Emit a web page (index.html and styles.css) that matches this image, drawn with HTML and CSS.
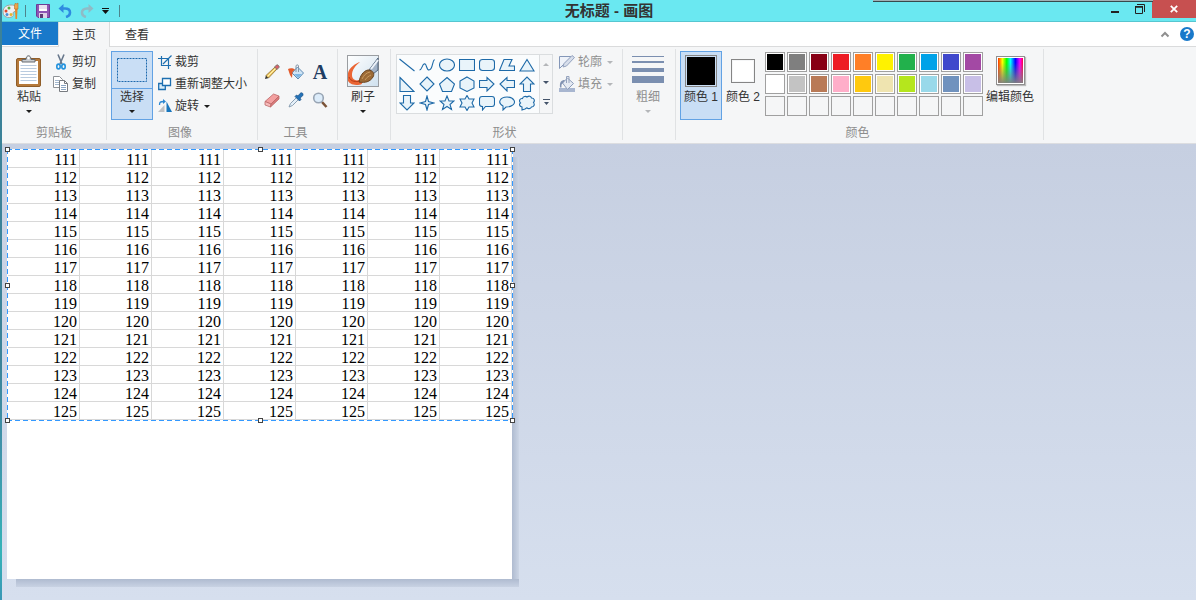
FILE: index.html
```html
<!DOCTYPE html>
<html lang="zh-CN">
<head>
<meta charset="utf-8">
<title>无标题 - 画图</title>
<link rel="stylesheet" href="styles.css">
</head>
<body>
<div class="backdrop"></div>
<div class="window">
  <header class="titlebar">
    <div class="quick">
      <svg class="app-icon" width="18" height="18" viewBox="0 0 18 18"><path d="M1 10C1 5 5 3 9 3c4 0 6 2 6 4 0 3-4 2-4 4s1 2 0 3c-1 2-10 3-10-4z" fill="#eef0f4" stroke="#a3a39c"/><circle cx="4" cy="9" r="1.5" fill="#e44a2c"/><circle cx="7" cy="6" r="1.5" fill="#58ad3c"/><circle cx="5" cy="12.500" r="1.500" fill="#4a8fd8"/><circle cx="9" cy="12.500" r="1.500" fill="#e8b32c"/><path d="M13 7h2.500l-.5 10h-1.500z" fill="#e7872a"/><path d="M12.500 7V3l1-2 1 1 1.500-1v6z" fill="#f0a64a" stroke="#b86f2c" stroke-width=".6"/></svg>
      <span class="bar"></span>
      <button class="qbtn" aria-label="保存"><svg width="14" height="14" viewBox="0 0 14 14"><path d="M.5.5h13v13H2l-1.500-1.500z" fill="#8d55b5" stroke="#6d3d94"/><path d="M3 1h8v6H3z" fill="#fff"/><path d="M3 2h8M3 4h8" stroke="#d5c3e2"/><path d="M3 9h8v5H3z" fill="#ddd2e6"/><path d="M4 10h3v4H4z" fill="#5b3a75"/></svg></button>
      <button class="qbtn" aria-label="撤消"><svg width="14" height="14" viewBox="0 0 14 14"><path d="M3 4.500h4c3.500 0 5 1.800 5 4 0 2-1.500 3.800-4 4.500" fill="none" stroke="#2e8be0" stroke-width="2.600"/><path d="M.5 4.500 5.500 0v9z" fill="#2e8be0"/></svg></button>
      <button class="qbtn" aria-label="重做"><svg width="14" height="14" viewBox="0 0 14 14"><path d="M11 4.500H7c-3.500 0-5 1.800-5 4C2 10.500 3.500 12.300 6 13" fill="none" stroke="#8fbbc6" stroke-width="2.600"/><path d="M13.500 4.500 8.500 0v9z" fill="#8fbbc6"/></svg></button>
      <button class="qbtn qmore" aria-label="自定义快速访问工具栏"><svg width="7" height="6" viewBox="0 0 7 6"><path d="M0 0h7v1H0zM0 2h7L3.500 6z" fill="#111"/></svg></button>
      <span class="bar"></span>
    </div>
    <h1 class="title">无标题 - 画图</h1>
    <div class="controls">
      <button class="ctl" aria-label="最小化"><svg width="12" height="12" viewBox="0 0 12 12"><path d="M2 8h8v2H2z" fill="#222"/></svg></button>
      <button class="ctl" aria-label="还原"><svg width="12" height="12" viewBox="0 0 12 12"><path d="M1.500 4h7v6.500h-7z" fill="none" stroke="#222"/><path d="M1 3h8v1.500H1z" fill="#222"/><path d="M3 1.500h7.500V9" fill="none" stroke="#222"/></svg></button>
      <button class="ctl close" aria-label="关闭"><svg width="8" height="8" viewBox="0 0 8 8"><path d="M.8.8l6.400 6.400M7.200.8.8 7.200" stroke="#fff" stroke-width="1.800"/></svg></button>
    </div>
    <div class="behind"></div>
  </header>

  <nav class="tabs">
    <button class="tab file">文件</button>
    <button class="tab active">主页</button>
    <button class="tab">查看</button>
    <div class="tab-tools">
      <button class="plain" aria-label="最小化功能区"><svg width="10" height="8" viewBox="0 0 10 8"><path d="M1.500 6.500 5 3l3.500 3.500" fill="none" stroke="#8f8f8f" stroke-width="2"/></svg></button>
      <button class="plain help" aria-label="帮助">?</button>
    </div>
  </nav>

  <main class="ribbon">
    <section class="group clipboard">
      <div class="body">
        <button class="big paste"><span class="pic"><svg width="26" height="32" viewBox="0 0 26 32"><rect x=".5" y="3.500" width="24" height="28" rx="1.500" fill="#b5793a" stroke="#8f5d29"/><path d="M3 6h19v23H3z" fill="#fff"/><path d="M4.500 10.500h16M4.500 13.500h16M4.500 16.500h16M4.500 19.500h16M4.500 22.500h16M4.500 25.500h16" stroke="#b9cbdf"/><path d="M6 7V4.500h4c0-5 5-5 5 0h4V7z" fill="#c9cdd1" stroke="#666b70"/><circle cx="12.500" cy="3" r="1.200" fill="#fff"/></svg></span><span class="cap">粘贴</span><i class="arrow"></i></button>
        <div class="rows">
          <button class="row"><svg width="16" height="16" viewBox="0 0 16 16"><path d="M5 .5 9 10M11 .5 7 10" stroke="#68788c" stroke-width="1.600"/><ellipse cx="5.500" cy="12.500" rx="1.700" ry="2.400" fill="none" stroke="#2392dd" stroke-width="1.600"/><ellipse cx="10.500" cy="12.500" rx="1.700" ry="2.400" fill="none" stroke="#2392dd" stroke-width="1.600"/></svg>剪切</button>
          <button class="row"><svg width="16" height="16" viewBox="0 0 16 16"><path d="M.5.500h6l3 3v8h-9z" fill="#fff" stroke="#8e9297"/><path d="M2 4.500h4M2 6.500h4M2 8.500h4" stroke="#a2b7ce"/><path d="M6.500 4.500h5l3 3v8h-8z" fill="#fff" stroke="#777b80"/><path d="M11.500 4.500v3h3" fill="none" stroke="#777b80"/><path d="M8 9.500h5M8 11.500h5M8 13.500h5" stroke="#8aa5c3"/></svg>复制</button>
        </div>
      </div>
      <h2 class="label">剪贴板</h2>
    </section>

    <section class="group image">
      <div class="body">
        <button class="big select on"><span class="pic"><svg width="32" height="26" viewBox="0 0 32 26"><rect x="1.500" y="1.500" width="29" height="23" fill="none" stroke="#1c69ad" stroke-dasharray="2 1"/></svg></span><span class="cap">选择</span><i class="arrow"></i></button>
        <div class="rows">
          <button class="row"><svg width="14" height="14" viewBox="0 0 14 14"><path d="M0 3.500h10.500V14M3.500 1v9.500H13M5 9l8.500-8.500" fill="none" stroke="#1e6fb0" stroke-width="1.200"/></svg>裁剪</button>
          <button class="row"><svg width="14" height="14" viewBox="0 0 14 14"><path d="M.7 6.500h6.600v6H.7z" fill="#d9edfa" stroke="#1e6fb0" stroke-width="1.300"/><path d="M4.500 1.500h8v7h-8z" fill="#fff" stroke="#1e6fb0" stroke-width="1.300"/></svg>重新调整大小</button>
          <button class="row"><svg width="14" height="14" viewBox="0 0 14 14"><path d="M6.500 6v7H0z" fill="#bfc1c4"/><path d="M8.500 2.500v10.500H14z" fill="#1976bd"/><path d="M1.500 6c0-3 1-3.500 4-3.500" fill="none" stroke="#2b87d1" stroke-width="1.300"/><path d="M5 0l3 2.500L5 5z" fill="#2b87d1"/></svg>旋转<i class="arrow"></i></button>
        </div>
      </div>
      <h2 class="label">图像</h2>
    </section>

    <section class="group tools">
      <div class="body">
        <button class="plain" aria-label="铅笔"><svg width="16" height="16" viewBox="0 0 16 16"><path d="M1 15l1-4 3 3z" fill="#333"/><path d="M2 11.500 11 3l2 2-8.500 9z" fill="#f2cc63" stroke="#8c6b2c" stroke-width=".8"/><path d="M3.500 12.500l8.500-8.500" stroke="#fff1b5"/><path d="M10.500 3l2.500 2.500 2-2c1-1-1.500-3.500-2.500-2.500z" fill="#d9606a" stroke="#667a6c" stroke-width=".8"/></svg></button>
        <button class="plain" aria-label="用颜色填充"><svg width="16" height="16" viewBox="0 0 16 16"><path d="M4 9 9.500 3l6 6L10 15z" fill="#cfe4f5" stroke="#5d89b2"/><path d="M6 10l8 0L10 14z" fill="#7db7e4"/><path d="M8 8V2c0-1.500 2.500-1.500 2.500 0v6" fill="none" stroke="#8597a9"/><path d="M0 5C2 4 5 4 7 5.500L4.500 8 4 14 2 11z" fill="#e35b2c"/></svg></button>
        <button class="plain letter" aria-label="文本">A</button>
        <button class="plain" aria-label="橡皮擦"><svg width="16" height="16" viewBox="0 0 16 16"><path d="M1 9.500 9.500 2l5.500 2-8 8z" fill="#f3a0a0" stroke="#bd6868" stroke-width=".8"/><path d="M1 9.500 7 12l-.5 3L1 13z" fill="#f7bcbc" stroke="#bd6868" stroke-width=".8"/><path d="M7 12l8-8v3l-8.500 8z" fill="#d97979" stroke="#bd6868" stroke-width=".8"/></svg></button>
        <button class="plain" aria-label="颜色选取器"><svg width="16" height="16" viewBox="0 0 16 16"><path d="M1 15l1.500-3.500 6-6 2 2-6 6z" fill="#e4eff8" stroke="#8096ab" stroke-width=".9"/><path d="M7 4.500 8.500 3l1.500 1 2-2.500c2-2 4 .5 2.500 2.500L12 6l1 1.500L11.500 9z" fill="#2573b8" stroke="#174f86" stroke-width=".7"/></svg></button>
        <button class="plain" aria-label="放大镜"><svg width="16" height="16" viewBox="0 0 16 16"><path d="M10 10l4.500 5" stroke="#7a5338" stroke-width="2.600"/><circle cx="6.500" cy="6" r="4.800" fill="#dcecfa" stroke="#98a5b4" stroke-width="1.600"/></svg></button>
      </div>
      <h2 class="label">工具</h2>
    </section>

    <section class="group brush">
      <div class="body">
        <button class="big"><span class="pic"><svg width="32" height="32" viewBox="0 0 32 32"><defs><linearGradient id="sky" x2="1" y2="1"><stop stop-color="#fff"/><stop offset="1" stop-color="#cfe0ee"/></linearGradient></defs><rect x=".5" y=".5" width="31" height="31" fill="url(#sky)" stroke="#9a9da1"/><path d="M13 7C9 8 2 13 1 18v8c2 3 5 4 10 4 5 0 5-3 3-6-4 3-9 1-9-4 0-5 3-9 8-13z" fill="#ea6534"/><path d="M2 22c2 5 7 5 11 4" stroke="#b83b14" fill="none"/><path d="M22 15 31 3v12l-5 4z" fill="#a2b3c8" stroke="#52667f"/><path d="M24 14 31 5" stroke="#edf3fa" stroke-width="2"/><path d="M12 27c1-6 4-11 9-12 5 0 7 4 5 7-3 5-8 6-14 5z" fill="#9c6a36" stroke="#68431f"/><path d="M15 24c2-4 4-6 8-7M18 25c2-3 4-4 6-5" stroke="#c99b60" fill="none"/></svg></span><span class="cap">刷子</span><i class="arrow"></i></button>
      </div>
    </section>

    <section class="group shapes">
      <div class="body">
        <div class="gallery">
          <div class="grid">
            <button class="plain" aria-label="直线"><svg class="s" viewBox="0 0 16 16"><path d="M.5 2 15.500 14"/></svg></button>
            <button class="plain" aria-label="曲线"><svg class="s open" viewBox="0 0 16 16"><path d="M.5 13C3 13 3 8 5 7c3-1 2 6 5 6 4 0 3-9 5.500-10.500"/></svg></button>
            <button class="plain" aria-label="椭圆形"><svg class="s" viewBox="0 0 16 16"><ellipse cx="8" cy="8" rx="7.500" ry="6"/></svg></button>
            <button class="plain" aria-label="矩形"><svg class="s" viewBox="0 0 16 16"><path d="M.5 2.500h15v11H.5z"/></svg></button>
            <button class="plain" aria-label="圆角矩形"><svg class="s" viewBox="0 0 16 16"><rect x=".5" y="2.500" width="15" height="11" rx="3"/></svg></button>
            <button class="plain" aria-label="多边形"><svg class="s" viewBox="0 0 16 16"><path d="M.5 13.500 5 2.500h8L10 9h5.500v4.500z"/></svg></button>
            <button class="plain" aria-label="三角形"><svg class="s" viewBox="0 0 16 16"><path d="M8 2.500l7 11.500H1z"/></svg></button>
            <button class="plain" aria-label="直角三角形"><svg class="s" viewBox="0 0 16 16"><path d="M1 1.500 15 15.500H1z"/></svg></button>
            <button class="plain" aria-label="菱形"><svg class="s" viewBox="0 0 16 16"><path d="M8 1l7 7-7 7-7-7z"/></svg></button>
            <button class="plain" aria-label="五边形"><svg class="s" viewBox="0 0 16 16"><path d="M8 1.500 15.500 8l-3 7.500h-9L.5 8z"/></svg></button>
            <button class="plain" aria-label="六边形"><svg class="s" viewBox="0 0 16 16"><path d="M8 1l7 4v7l-7 3.500L1 12V5z"/></svg></button>
            <button class="plain" aria-label="右箭头"><svg class="s" viewBox="0 0 16 16"><path d="M.5 4.500H8v-3L15 8l-7 7v-3.500H.5z"/></svg></button>
            <button class="plain" aria-label="左箭头"><svg class="s" viewBox="0 0 16 16"><path d="M15.500 4.500H8v-3L1 8l7 7v-3.500h7.500z"/></svg></button>
            <button class="plain" aria-label="上箭头"><svg class="s" viewBox="0 0 16 16"><path d="M4.500 15.500V8h-3.500l7-7 7 7h-3.500v7.500z"/></svg></button>
            <button class="plain" aria-label="下箭头"><svg class="s" viewBox="0 0 16 16"><path d="M4.500.5V8h-3.500l7 7 7-7h-3.500V.5z"/></svg></button>
            <button class="plain" aria-label="四角星形"><svg class="s" viewBox="0 0 16 16"><path d="M8 1l1.500 5.500L15 8 9.500 9.500 8 15 6.500 9.500 1 8l5.500-1.500z"/></svg></button>
            <button class="plain" aria-label="五角星形"><svg class="s" viewBox="0 0 16 16"><path d="M8 1l2 5h5l-4 3.500 1.500 5L8 11.500l-4.500 3 1.500-5L1 6h5z"/></svg></button>
            <button class="plain" aria-label="六角星形"><svg class="s" viewBox="0 0 16 16"><path d="M8 .5l2 3.500h5L13 8l2 4h-5l-2 3.500L6 12H1l2-4-2-4h5z"/></svg></button>
            <button class="plain" aria-label="圆角矩形标注"><svg class="s" viewBox="0 0 16 16"><path d="M3 1.500h10q2.500 0 2.500 2.500v5q0 2.500-2.500 2.500H6.500L3.500 15v-3.500Q.5 11.500.5 9V4Q.5 1.500 3 1.500z"/></svg></button>
            <button class="plain" aria-label="椭圆形标注"><svg class="s" viewBox="0 0 16 16"><path d="M4 15v-4C-2 8 1 2 8 2s10 6 5 8.500C11 12 9 12 7 12z"/></svg></button>
            <button class="plain" aria-label="云形标注"><svg class="s" viewBox="0 0 16 16"><path d="M3 12C0 11 0 9 1.500 8-.5 6 1 3 3.500 3.500 4 1 7 1 8 2c2-1.500 4-1 4.500 1 3 0 3.500 3 2 4.500 1.500 2 .5 4.500-2 4.500-1 2-3.500 2-4.500 0.800L6 14 3 15z"/></svg></button>
          </div>
          <div class="scroll">
            <button class="plain" aria-label="向上滚动" disabled><i class="arrow up pale"></i></button>
            <button class="plain" aria-label="向下滚动"><i class="arrow slate"></i></button>
            <button class="plain" aria-label="更多形状"><svg width="7" height="7" viewBox="0 0 7 7"><path d="M0 0h7v1H0zM1 3h5L3.500 6z" fill="#44546a"/></svg></button>
          </div>
        </div>
        <div class="rows">
          <button class="row" disabled><svg width="16" height="16" viewBox="0 0 16 16"><path d="M13 2.500H.5v12l12-12" fill="#eef2f9" stroke="#8497b8"/><path d="M4 13l1-3.500 8-8 2.500 2L7.500 12z" fill="#d7deeb" stroke="#94a3bf"/></svg>轮廓<i class="arrow pale"></i></button>
          <button class="row" disabled><svg width="16" height="16" viewBox="0 0 16 16"><path d="M0 12h16v4H0z" fill="#a8b6d0"/><path d="M3.500 7 8.500 2l6 5.500-6 6z" fill="#e4e9f2" stroke="#8d9dba"/><path d="M7.500 7V.5h2.500V7" fill="none" stroke="#94a2bd"/><path d="M1 11.500C.5 6 2 4 6 4L4 7c-2 1-1.500 3-1.500 4.500z" fill="#8192b2"/></svg>填充<i class="arrow pale"></i></button>
        </div>
      </div>
      <h2 class="label">形状</h2>
    </section>

    <section class="group size">
      <div class="body">
        <button class="big" disabled><span class="pic"><svg width="32" height="32" viewBox="0 0 32 32"><path d="M0 1h32v1H0zM0 6h32v2H0zM0 13h32v4H0zM0 21h32v7H0z" fill="#7b8fb0"/></svg></span><span class="cap">粗细</span><i class="arrow pale"></i></button>
      </div>
    </section>

    <section class="group colors">
      <div class="body">
        <button class="big on"><span class="pic"><span class="chip first"></span></span><span class="cap">颜色 1</span></button>
        <button class="big"><span class="pic"><span class="chip second"></span></span><span class="cap">颜色 2</span></button>
        <div class="palette">
          <button class="sw black" aria-label="黑色"></button><button class="sw gray" aria-label="灰色-50%"></button><button class="sw maroon" aria-label="深红色"></button><button class="sw red" aria-label="红色"></button><button class="sw orange" aria-label="橙色"></button><button class="sw yellow" aria-label="黄色"></button><button class="sw green" aria-label="绿色"></button><button class="sw cyan" aria-label="青绿"></button><button class="sw indigo" aria-label="靛蓝"></button><button class="sw purple" aria-label="紫色"></button>
          <button class="sw white" aria-label="白色"></button><button class="sw silver" aria-label="灰色-25%"></button><button class="sw brown" aria-label="褐色"></button><button class="sw rose" aria-label="玫瑰色"></button><button class="sw gold" aria-label="金色"></button><button class="sw cream" aria-label="浅黄色"></button><button class="sw lime" aria-label="酸橙色"></button><button class="sw aqua" aria-label="淡青绿色"></button><button class="sw steel" aria-label="蓝灰色"></button><button class="sw lavender" aria-label="淡紫色"></button>
          <button class="sw" aria-label="自定义 1"></button><button class="sw" aria-label="自定义 2"></button><button class="sw" aria-label="自定义 3"></button><button class="sw" aria-label="自定义 4"></button><button class="sw" aria-label="自定义 5"></button><button class="sw" aria-label="自定义 6"></button><button class="sw" aria-label="自定义 7"></button><button class="sw" aria-label="自定义 8"></button><button class="sw" aria-label="自定义 9"></button><button class="sw" aria-label="自定义 10"></button>
        </div>
        <button class="big edit"><span class="pic"><span class="spectrum"></span></span><span class="cap">编辑颜色</span></button>
      </div>
      <h2 class="label">颜色</h2>
    </section>
  </main>

  <div class="workspace">
    <div class="canvas">
      <div class="selection">
        <table class="sheet">
          <tr><td>111</td><td>111</td><td>111</td><td>111</td><td>111</td><td>111</td><td>111</td></tr>
          <tr><td>112</td><td>112</td><td>112</td><td>112</td><td>112</td><td>112</td><td>112</td></tr>
          <tr><td>113</td><td>113</td><td>113</td><td>113</td><td>113</td><td>113</td><td>113</td></tr>
          <tr><td>114</td><td>114</td><td>114</td><td>114</td><td>114</td><td>114</td><td>114</td></tr>
          <tr><td>115</td><td>115</td><td>115</td><td>115</td><td>115</td><td>115</td><td>115</td></tr>
          <tr><td>116</td><td>116</td><td>116</td><td>116</td><td>116</td><td>116</td><td>116</td></tr>
          <tr><td>117</td><td>117</td><td>117</td><td>117</td><td>117</td><td>117</td><td>117</td></tr>
          <tr><td>118</td><td>118</td><td>118</td><td>118</td><td>118</td><td>118</td><td>118</td></tr>
          <tr><td>119</td><td>119</td><td>119</td><td>119</td><td>119</td><td>119</td><td>119</td></tr>
          <tr><td>120</td><td>120</td><td>120</td><td>120</td><td>120</td><td>120</td><td>120</td></tr>
          <tr><td>121</td><td>121</td><td>121</td><td>121</td><td>121</td><td>121</td><td>121</td></tr>
          <tr><td>122</td><td>122</td><td>122</td><td>122</td><td>122</td><td>122</td><td>122</td></tr>
          <tr><td>123</td><td>123</td><td>123</td><td>123</td><td>123</td><td>123</td><td>123</td></tr>
          <tr><td>124</td><td>124</td><td>124</td><td>124</td><td>124</td><td>124</td><td>124</td></tr>
          <tr><td>125</td><td>125</td><td>125</td><td>125</td><td>125</td><td>125</td><td>125</td></tr>
        </table>
        <i class="handle top left"></i><i class="handle top center"></i><i class="handle top right"></i>
        <i class="handle middle left"></i><i class="handle middle right"></i>
        <i class="handle bottom left"></i><i class="handle bottom center"></i><i class="handle bottom right"></i>
      </div>
    </div>
  </div>
</div>
</body>
</html>
```

FILE: styles.css
```css
* { box-sizing: border-box; }

body {
  margin: 0;
  min-height: 100vh;
  display: flex;
  font: 12px/16px "Liberation Sans", "Noto Sans CJK SC", sans-serif;
  color: #333;
}

button {
  margin: 0;
  padding: 0;
  border: 0;
  background: none;
  font: inherit;
  color: inherit;
}

h1, h2 { margin: 0; font: inherit; }
svg { display: block; flex: none; }

.backdrop {
  flex: 0 0 2px;
  background: linear-gradient(#3b8299 0, #3b8299 60%, #3f93aa 75%, #35b3b8 92%, #3a97b5);
}

.window {
  flex: 1;
  min-width: 0;
  display: flex;
  flex-direction: column;
}

/* Title bar */
.titlebar {
  position: relative;
  height: 22px;
  display: flex;
  background: #6ae8f1;
  border-bottom: 1px solid #57c6d0;
}

.quick { display: flex; align-items: center; }
.app-icon { margin-right: 5px; }
.bar { width: 1px; height: 12px; background: #4d858c; }
.qbtn { width: 22px; display: flex; justify-content: center; }
.bar + .qbtn { margin-left: 6px; }
.qmore { width: 14px; margin-right: 7px; }

.title {
  flex: 1;
  padding-right: 4px;
  text-align: center;
  font-size: 15px;
  line-height: 21px;
  font-weight: 700;
  color: #333;
}

.controls { display: flex; }
.ctl { width: 25px; height: 18px; display: flex; align-items: center; justify-content: center; }
.ctl.close { width: 44px; background: #c75050; }

.behind {
  position: absolute;
  top: 0;
  right: 43px;
  width: 280px;
  height: 2px;
  background: #9fb0b5;
  border-bottom: 1px solid #38494d;
}

/* Tabs */
.tabs {
  height: 25px;
  display: flex;
  align-items: flex-start;
  background: #fff;
  box-shadow: inset 0 -1px #dadbdc;
}

.tab { height: 25px; padding: 0 15px; }
.tab.file { width: 56px; height: 23px; background: #1979ca; color: #fff; }
.tab.active {
  background: #f5f6f7;
  border: solid #dadbdc;
  border-width: 0 1px;
  padding: 0 13px;
}

.tab-tools { margin-left: auto; display: flex; align-items: center; gap: 10px; height: 24px; padding-right: 2px; }
.plain { display: flex; align-items: center; justify-content: center; }
.help { width: 14px; height: 14px; border-radius: 50%; background: #1979ca; color: #fff; font-weight: 700; line-height: 14px; }

/* Ribbon */
.ribbon {
  display: flex;
  background: #f5f6f7;
  border-bottom: 1px solid #dcdde0;
  padding: 2px 0 3px;
}

.group {
  flex: none;
  display: flex;
  flex-direction: column;
  height: 91px;
  border-right: 1px solid #e0e2e4;
}
.body { flex: 1; display: flex; align-items: flex-start; padding-top: 2px; }
.label { text-align: center; line-height: 14px; color: #8c8c8c; }

.big {
  width: 42px;
  height: 69px;
  display: flex;
  flex-direction: column;
  align-items: center;
  border: 1px solid transparent;
}
.big.on { background: #c9def5; border-color: #62a2e4; }
.pic { height: 37px; align-self: stretch; display: flex; align-items: center; justify-content: center; }
.select .pic { border-bottom: 1px solid #62a2e4; }
.cap { white-space: nowrap; }
.big .arrow { margin-top: 5px; }
.big:disabled, .row:disabled { color: #8f8f8f; }

.arrow {
  width: 0;
  border: 3px solid transparent;
  border-top-color: #1d1d1d;
  border-bottom: 0;
}
.arrow.pale { border-top-color: #b4b6b9; }
.arrow.slate { border-top-color: #44546a; }
.arrow.up { border-top: 0; border-bottom: 3px solid #b4b6b9; }

.rows { display: flex; flex-direction: column; }
.row { height: 22px; display: flex; align-items: center; gap: 3px; white-space: nowrap; }
.row .arrow { margin-left: 2px; }

.clipboard { width: 105px; }
.clipboard .body { padding-left: 6px; }
.clipboard .rows { padding-left: 3px; }

.image { width: 151px; }
.image .body { padding-left: 4px; gap: 5px; }
.image .label { padding-right: 4px; }

.tools { width: 80px; }
.tools .body {
  display: grid;
  grid-template-columns: repeat(3, 24px);
  grid-auto-rows: 28px;
  align-items: center;
  padding: 9px 0 0 2px;
}
.tools .label { padding-right: 4px; }
.letter { font: bold 20px/20px "Liberation Serif", serif; color: #1f3d63; }

.brush, .size { width: 53px; }
.brush .body, .size .body { padding-left: 4px; }

.shapes { width: 232px; }
.shapes .body { padding-left: 5px; gap: 6px; }
.shapes .label { padding-right: 4px; }
.gallery {
  margin-top: 3px;
  display: flex;
  height: 60px;
  background: #fafcfd;
  border: 1px solid #dadddf;
}
.grid { display: grid; grid-template-columns: repeat(7, 20px); padding-right: 2px; }
.s { width: 16px; height: 16px; fill: #e9f4fa; stroke: #1e6aa8; stroke-width: 1.1; }
.s.open { fill: none; }
.scroll { width: 13px; display: grid; background: #f5f6f7; border-left: 1px solid #dadddf; }

.colors { width: 368px; }
.colors .body { padding-left: 4px; }
.colors .label { padding-right: 4px; }
.chip { width: 32px; height: 32px; border: 1px solid #858585; padding: 1px; background-clip: content-box; }
.chip.first { background-color: #000; }
.chip.second { width: 24px; height: 24px; background-color: #fff; }

.palette {
  display: grid;
  grid-template-columns: repeat(10, 20px);
  gap: 2px;
  padding: 1px 1px 0;
}
.sw { height: 20px; border: 1px solid #a0a0a0; }
.sw[class*=" "] { box-shadow: inset 0 0 0 1px #fff; }
.black { background: #000; }
.gray { background: #7f7f7f; }
.maroon { background: #880015; }
.red { background: #ed1c24; }
.orange { background: #ff7f27; }
.yellow { background: #fff200; }
.green { background: #22b14c; }
.cyan { background: #00a2e8; }
.indigo { background: #3f48cc; }
.purple { background: #a349a4; }
.white { background: #fff; }
.silver { background: #c3c3c3; }
.brown { background: #b97a57; }
.rose { background: #ffaec9; }
.gold { background: #ffc90e; }
.cream { background: #efe4b0; }
.lime { background: #b5e61d; }
.aqua { background: #99d9ea; }
.steel { background: #7092be; }
.lavender { background: #c8bfe7; }

.edit { width: 52px; }
.spectrum {
  width: 29px;
  height: 29px;
  border: 1px solid #8f8f8f;
  box-shadow: inset 0 0 0 1px #fff, 1px 1px 1px #bbb;
  background:
    linear-gradient(transparent 20%, #808080),
    linear-gradient(90deg, #f00, #ff0 20%, #0f0 36%, #0ff 50%, #00f 68%, #f0f 85%, #f00);
}

/* Drawing area */
.workspace {
  flex: 1;
  padding: 5px 5px 21px;
  background: linear-gradient(#c6cfe1, #d6dfee);
}

.canvas {
  position: relative;
  width: 505px;
  min-height: 430px;
  background: #fff;
}
.canvas::before, .canvas::after { content: ""; position: absolute; }
.canvas::before {
  top: 8px;
  left: 100%;
  bottom: 0;
  width: 7px;
  background: linear-gradient(90deg, #afbbd0, #cbd5e5);
}
.canvas::after {
  top: 100%;
  left: 9px;
  right: -7px;
  height: 8px;
  background: linear-gradient(#afbbd0, #c8d2e3);
}

.selection {
  position: relative;
  z-index: 1;
  width: 506px;
  padding: 1px;
  background:
    repeating-linear-gradient(90deg, #3399ff 0 5px, #fff 5px 8px) top / 100% 1px no-repeat,
    repeating-linear-gradient(90deg, #3399ff 0 5px, #fff 5px 8px) bottom / 100% 1px no-repeat,
    repeating-linear-gradient(#3399ff 0 5px, #fff 5px 8px) left / 1px 100% no-repeat,
    repeating-linear-gradient(#3399ff 0 5px, #fff 5px 8px) right / 1px 100% no-repeat;
}

.sheet {
  width: 100%;
  table-layout: fixed;
  border-spacing: 0;
  font: 16px/15px "Liberation Serif", serif;
  color: #000;
}
.sheet td {
  height: 18px;
  padding: 2px 2px 0 0;
  text-align: right;
  border: solid #d8d8d8;
  border-width: 0 1px 1px 0;
}

.handle {
  position: absolute;
  width: 5px;
  height: 5px;
  background: #fff;
  border: 1px solid #444;
}
.handle.top { top: -2px; }
.handle.middle { top: calc(50% - 2px); }
.handle.bottom { bottom: -2px; }
.handle.left { left: -2px; }
.handle.center { left: calc(50% - 2px); }
.handle.right { right: -2px; }
```
